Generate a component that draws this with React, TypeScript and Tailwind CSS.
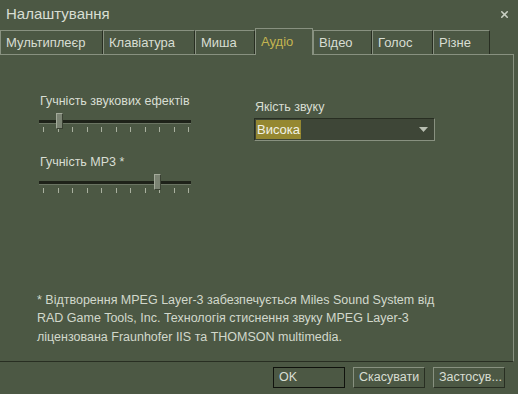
import { X } from 'lucide-react';

const FONT = "font-['Liberation_Sans',Arial,sans-serif]";

const TABS = [
  { label: 'Мультиплеєр', w: 'w-[103px]' },
  { label: 'Клавіатура', w: 'w-[92px]' },
  { label: 'Миша', w: 'w-[60px]' },
  { label: 'Аудіо', w: 'w-[58px]', active: true },
  { label: 'Відео', w: 'w-[59px]' },
  { label: 'Голос', w: 'w-[61px]' },
  { label: 'Різне', w: 'w-[57px]' },
];

const Slider = ({ label, thumb }: { label: string; thumb: number }) => (
  <div className="flex flex-col">
    <span className="whitespace-nowrap text-[12.5px] leading-[16px] text-[#d8ded3] pl-[1px]">{label}</span>
    <div className="relative w-[152px] h-[22px] mt-[4px]">
      {/* track */}
      <div className="absolute left-0 right-0 top-[7px] h-[4px] bg-[#1e2219] border-b border-[#6a7462]" />
      {/* ticks */}
      <div className="absolute left-[4px] right-[2px] top-[14px] h-[5px] flex justify-between">
        {Array.from({ length: 11 }).map((_, i) => (
          <span key={i} className="w-px h-full bg-[#a9b09f]" />
        ))}
      </div>
      {/* thumb */}
      <div
        className="absolute top-0 w-[7px] h-[16px] bg-[#7b8373] border-l border-t border-[#a3aa9a] border-r border-b border-r-[#3a4133] border-b-[#3a4133]"
        style={{ left: thumb }}
      />
    </div>
  </div>
);

const Button = ({ label, primary }: { label: string; primary?: boolean }) => (
  <div
    className={
      primary
        ? 'w-[72px] h-[21px] border border-[#10120d] flex items-center pl-[5px] text-[12.5px] text-[#d8ded3]'
        : 'w-[72px] h-[21px] border border-t-[#889180] border-l-[#889180] border-r-[#282e22] border-b-[#282e22] flex items-center pl-[5px] text-[12.5px] text-[#d8ded3]'
    }
  >
    {label}
  </div>
);

const App = () => {
  return (
    <div className={`w-[518px] h-[394px] bg-[#4c5844] flex flex-col overflow-hidden ${FONT}`}>
      {/* title */}
      <div className="h-[28px] flex items-center justify-between pl-[6px] pr-[8px]">
        <span className="text-[15px] text-[#d8ded3]">Налаштування</span>
        <X className="w-[11px] h-[11px] text-[#c9cfc3]" strokeWidth={3.5} />
      </div>

      {/* tabs */}
      <div className="h-[27px] flex items-end">
        {TABS.map(t =>
          t.active ? (
            <div
              key={t.label}
              className={`${t.w} h-[27px] border-l border-t border-r border-[#889180] flex items-center pl-[5px] pb-[1px] text-[13px] text-[#c4b550] relative z-10 bg-[#4c5844]`}
            >
              {t.label}
            </div>
          ) : (
            <div
              key={t.label}
              className={`${t.w} h-[25px] border-l border-t border-r border-[#889180] border-r-[#282e22] flex items-center pl-[5px] text-[13px] text-[#d8ded3]`}
            >
              {t.label}
            </div>
          ),
        )}
      </div>

      {/* panel */}
      <div className="w-[514px] h-[308px] -mt-px border-t border-r border-[#889180] border-b border-b-[#282e22] flex flex-col">
        <div className="flex pt-[38px]">
          <div className="ml-[39px] w-[152px] flex flex-col gap-[19px]">
            <Slider label="Гучність звукових ефектів" thumb={17} />
            <Slider label="Гучність MP3 *" thumb={115} />
          </div>
          <div className="ml-[63px] flex flex-col pt-[6px]">
            <span className="text-[12.5px] leading-[16px] text-[#d8ded3] pl-[1px]">Якість звуку</span>
            <div className="mt-[3px] w-[181px] h-[23px] bg-[#3e4637] border border-t-[#282e22] border-l-[#282e22] border-r-[#889180] border-b-[#889180] flex items-center justify-between pl-[1px] pr-[6px]">
              <span className="bg-[#958831] text-[13px] text-[#f0f2e8] h-[19px] flex items-center px-[1px]">Висока</span>
              <svg width="9" height="5" viewBox="0 0 9 5">
                <path d="M0 0 L9 0 L4.5 5 Z" fill="#b9bfb2" />
              </svg>
            </div>
          </div>
        </div>

        <div className="mt-auto mb-[15px] ml-[37px] text-[12.5px] leading-[18.5px] text-[#d2d8cc]">
          <p>* Відтворення MPEG Layer-3 забезпечується Miles Sound System від</p>
          <p>RAD Game Tools, Inc. Технологія стиснення звуку MPEG Layer-3</p>
          <p>ліцензована Fraunhofer IIS та THOMSON multimedia.</p>
        </div>
      </div>

      {/* buttons */}
      <div className="flex justify-end gap-[8px] pr-[13px] pt-[5px]">
        <Button label="OK" primary />
        <Button label="Скасувати" />
        <Button label="Застосув..." />
      </div>
    </div>
  );
};

export default App;
